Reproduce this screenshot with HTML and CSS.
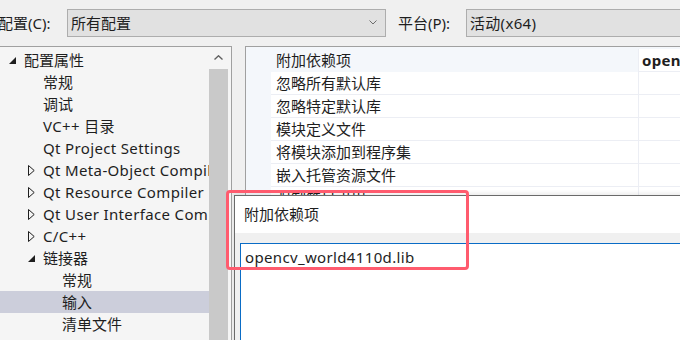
FILE: index.html
```html
<!DOCTYPE html>
<html lang="zh-CN">
<head>
    <meta charset="UTF-8">
    <title>属性页 - 链接器 输入</title>
    <link rel="stylesheet" href="styles.css">
</head>
<body>
    <div class="toolbar">
        <span class="label first">配置(C):</span>
        <div class="combo wide">
            <span>所有配置</span>
            <svg class="chev" width="8" height="5" viewBox="0 0 8 5"><path d="M0.5 0.5 L4 4 L7.5 0.5" fill="none" stroke="#6d6d6d" stroke-width="1"/></svg>
        </div>
        <span class="label second">平台(P):</span>
        <div class="combo rest"><span>活动(x64)</span></div>
    </div>

    <div class="main">
        <div class="tree">
            <ul class="items">
                <li class="lvl0"><svg class="open" width="7" height="7" viewBox="0 0 7 7"><path d="M7 0 L7 7 L0 7 Z" fill="#1e1e1e"/></svg>配置属性</li>
                <li class="lvl1">常规</li>
                <li class="lvl1">调试</li>
                <li class="lvl1 en">VC++ 目录</li>
                <li class="lvl1 en">Qt Project Settings</li>
                <li class="lvl1 en"><svg class="shut" width="7" height="11" viewBox="0 0 7 11"><path d="M0.5 0.5 L6.2 5.5 L0.5 10.5 Z" fill="none" stroke="#1e1e1e" stroke-width="1"/></svg>Qt Meta-Object Compiler</li>
                <li class="lvl1 en"><svg class="shut" width="7" height="11" viewBox="0 0 7 11"><path d="M0.5 0.5 L6.2 5.5 L0.5 10.5 Z" fill="none" stroke="#1e1e1e" stroke-width="1"/></svg>Qt Resource Compiler</li>
                <li class="lvl1 en"><svg class="shut" width="7" height="11" viewBox="0 0 7 11"><path d="M0.5 0.5 L6.2 5.5 L0.5 10.5 Z" fill="none" stroke="#1e1e1e" stroke-width="1"/></svg>Qt User Interface Compiler</li>
                <li class="lvl1 en"><svg class="shut" width="7" height="11" viewBox="0 0 7 11"><path d="M0.5 0.5 L6.2 5.5 L0.5 10.5 Z" fill="none" stroke="#1e1e1e" stroke-width="1"/></svg>C/C++</li>
                <li class="lvl1"><svg class="open" width="7" height="7" viewBox="0 0 7 7"><path d="M7 0 L7 7 L0 7 Z" fill="#1e1e1e"/></svg>链接器</li>
                <li class="lvl2">常规</li>
                <li class="lvl2 selected">输入</li>
                <li class="lvl2">清单文件</li>
            </ul>
            <div class="scrollbar">
                <div class="up">
                    <svg width="9" height="5" viewBox="0 0 9 5"><path d="M0.5 4.5 L4.5 0.8 L8.5 4.5" fill="none" stroke="#606060" stroke-width="1.4"/></svg>
                </div>
                <div class="thumb"></div>
            </div>
        </div>

        <div class="grid">
            <div class="row current"><span class="gutter"></span><span class="name">附加依赖项</span><span class="value">opencv_world4110d.lib;%(AdditionalDependencies)</span></div>
            <div class="row"><span class="gutter"></span><span class="name">忽略所有默认库</span><span class="value"></span></div>
            <div class="row"><span class="gutter"></span><span class="name">忽略特定默认库</span><span class="value"></span></div>
            <div class="row"><span class="gutter"></span><span class="name">模块定义文件</span><span class="value"></span></div>
            <div class="row"><span class="gutter"></span><span class="name">将模块添加到程序集</span><span class="value"></span></div>
            <div class="row"><span class="gutter"></span><span class="name">嵌入托管资源文件</span><span class="value"></span></div>
            <div class="row"><span class="gutter"></span><span class="name">强制符号引用</span><span class="value"></span></div>
            <div class="row"><span class="gutter"></span><span class="name">延迟加载的 DLL</span><span class="value"></span></div>
            <div class="row"><span class="gutter"></span><span class="name">程序集链接资源</span><span class="value"></span></div>
        </div>
    </div>

    <div class="dialog">
        <div class="title">附加依赖项</div>
        <div class="edit">opencv_world4110d.lib</div>
    </div>

    <div class="mark"></div>
</body>
</html>
```

FILE: styles.css
```css
body {
    margin: 0;
    width: 680px;
    height: 340px;
    overflow: hidden;
    position: relative;
    background: #f0f0f0;
    color: #1e1e1e;
    font-family: "Noto Sans", "Noto Sans CJK SC", sans-serif;
    font-size: 15px;
}

.toolbar {
    display: flex;
    align-items: center;
    height: 46px;
    white-space: nowrap;
}

.label {
    flex: none;
    line-height: 20px;
}
.label.first {
    margin-left: -2px;
    width: 69px;
}
.label.second {
    margin-left: 12px;
    width: 68px;
}

.combo {
    flex: none;
    display: flex;
    align-items: center;
    height: 28px;
    box-sizing: border-box;
    border: 1px solid #adadad;
    background: #e1e1e1;
    padding-left: 3px;
    margin-top: -1px;
}
.combo.wide {
    width: 319px;
}
.combo.rest {
    width: 240px;
    letter-spacing: 0.3px;
}
.combo .chev {
    margin-left: auto;
    margin-right: 8px;
}

.main {
    display: flex;
    height: 294px;
}

.tree {
    flex: none;
    display: flex;
    width: 232px;
    box-sizing: border-box;
    border-top: 1px solid #a0a0a0;
    border-right: 1px solid #a0a0a0;
    background: #f5f5f5;
}

.items {
    list-style: none;
    margin: 0;
    padding: 2px 0 0;
    width: 209px;
    overflow: hidden;
    white-space: nowrap;
}
.items li {
    display: flex;
    align-items: center;
    height: 22px;
    line-height: 22px;
}
.items li.en {
    letter-spacing: 0.35px;
}
.items .lvl0 { padding-left: 24px; }
.items .lvl1 { padding-left: 43px; }
.items .lvl2 { padding-left: 62px; }
.items li svg {
    flex: none;
    margin-left: -15px;
    margin-right: 8px;
}
.items li svg.open {
    margin-top: 1px;
}
.items .selected {
    background: #cccedb;
}

.scrollbar {
    flex: none;
    width: 19px;
    margin-right: 3px;
    display: flex;
    flex-direction: column;
}
.scrollbar .up {
    height: 23px;
    display: flex;
    justify-content: center;
    align-items: center;
    margin-top: -1px;
}
.scrollbar .thumb {
    flex: 1;
    background: #c9c9c9;
}

.grid {
    flex: 1;
    margin-left: 13px;
    border-top: 1px solid #a0a0a0;
    border-left: 1px solid #a0a0a0;
    background: #f4f7fb;
    padding-top: 2px;
    overflow: hidden;
}

.row {
    display: flex;
    height: 23px;
    line-height: 22px;
    white-space: nowrap;
}
.row .gutter {
    flex: none;
    width: 25px;
}
.row .name {
    flex: none;
    width: 362px;
    padding-left: 5px;
    background: #fff;
    border-bottom: 1px solid #eceef4;
}
.row .value {
    flex: 1;
    padding-left: 3px;
    background: #fff;
    border-left: 1px solid #eceef4;
    border-bottom: 1px solid #eceef4;
    font-weight: bold;
    letter-spacing: 0.3px;
    overflow: hidden;
}
.row.current .name {
    background: #f4f7fb;
    border-bottom-color: #f4f7fb;
}

.dialog {
    position: absolute;
    left: 234px;
    top: 195px;
    width: 480px;
    height: 170px;
    border-top: 1px solid #6a6a6a;
    border-left: 1px solid #6a6a6a;
    background: #f0f0f0;
    box-shadow: 0 -2px 4px rgba(0, 0, 0, 0.08);
}
.dialog .title {
    height: 37px;
    line-height: 37px;
    padding-left: 9px;
    background: #fff;
    margin-bottom: 10px;
}
.dialog .edit {
    margin-left: 5px;
    height: 120px;
    border: 1px solid #0a6cc6;
    border-right: none;
    background: #fff;
    padding: 3px 4px;
    line-height: 20px;
    letter-spacing: 0.35px;
}

.mark {
    position: absolute;
    left: 226px;
    top: 190px;
    width: 243px;
    height: 80px;
    box-sizing: border-box;
    border: 3px solid #ff5b6e;
    border-radius: 4px;
}
```
